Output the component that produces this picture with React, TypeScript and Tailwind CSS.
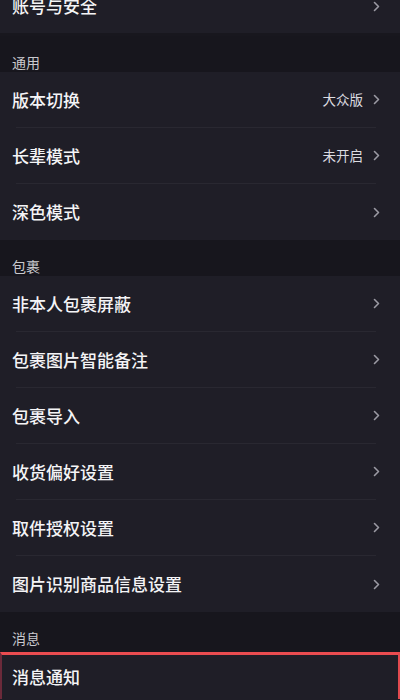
import React from 'react';

type Item = { label: string; value?: string; chevron?: boolean };

const GENERAL: Item[] = [
  { label: '版本切换', value: '大众版', chevron: true },
  { label: '长辈模式', value: '未开启', chevron: true },
  { label: '深色模式', chevron: true },
];

const PARCEL: Item[] = [
  { label: '非本人包裹屏蔽', chevron: true },
  { label: '包裹图片智能备注', chevron: true },
  { label: '包裹导入', chevron: true },
  { label: '收货偏好设置', chevron: true },
  { label: '取件授权设置', chevron: true },
  { label: '图片识别商品信息设置', chevron: true },
];

function Chevron() {
  return (
    <svg width="7" height="11" viewBox="0 0 7 11" fill="none" className="shrink-0">
      <path d="M1.5 1.5l4 4-4 4" stroke="#9b9aa3" strokeWidth="1.6" strokeLinecap="round" strokeLinejoin="round" />
    </svg>
  );
}

function Row({ item, className = 'h-[55px]' }: { item: Item; className?: string }) {
  return (
    <div className={`flex items-center justify-between pl-3 pr-5 ${className}`}>
      <span className="text-[17px] font-medium text-[#f4f4f6]">{item.label}</span>
      <span className="flex items-center gap-2.5">
        {item.value && <span className="text-[13.5px] text-[#dcdce0]">{item.value}</span>}
        {item.chevron && <Chevron />}
      </span>
    </div>
  );
}

function Divider() {
  return <div className="ml-4 mr-6 h-px bg-[#292831]" />;
}

function SectionHeader({ title, className = 'h-9' }: { title: string; className?: string }) {
  return (
    <div className={`bg-[#17161d] pl-3 pt-4 ${className}`}>
      <span className="block text-[14px] leading-5 text-[#c9c9ce]">{title}</span>
    </div>
  );
}

function Group({ items }: { items: Item[] }) {
  return (
    <div>
      {items.map((it, i) => (
        <React.Fragment key={it.label}>
          <Row item={it} className={i === items.length - 1 ? 'h-14' : 'h-[55px]'} />
          {i < items.length - 1 && <Divider />}
        </React.Fragment>
      ))}
    </div>
  );
}

export default function App() {
  return (
    <div
      className="min-h-[700px] w-full overflow-hidden bg-[#1f1e27]"
      style={{ fontFamily: '"Noto Sans CJK SC", "Noto Sans", sans-serif' }}
    >
      <div className="-mt-[21px] border-b-[3px] border-[#18171e]">
        <Row item={{ label: '账号与安全', chevron: true }} className="h-[54px]" />
      </div>
      <SectionHeader title="通用" />
      <Group items={GENERAL} />
      <SectionHeader title="包裹" />
      <Group items={PARCEL} />
      <SectionHeader title="消息" className="h-10" />
      <div className="border-x-2 border-t-[3px] border-l-[#6b2a3a] border-r-[#e24a4f] border-t-[#ea4c50]">
        <Row item={{ label: '消息通知' }} className="h-[44px] pl-[10px]" />
      </div>
    </div>
  );
}
